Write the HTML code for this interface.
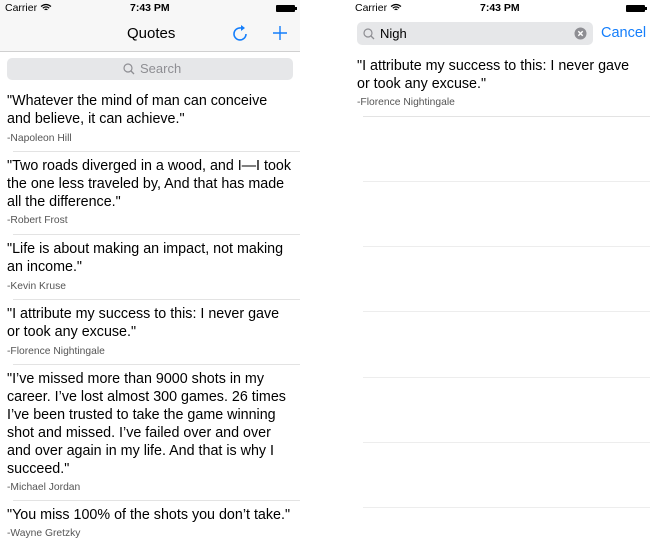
<!DOCTYPE html>
<html><head><meta charset="utf-8"><style>
*{margin:0;padding:0;box-sizing:border-box}
body{width:650px;height:534px;background:#fff;position:relative;overflow:hidden;font-family:"Liberation Sans",sans-serif;color:#000}
.a{position:absolute;white-space:nowrap}
.q{font-size:14.3px;left:7px}
.au{font-size:10.3px;color:#555;left:7px}
.sep{position:absolute;height:1px;background:#e3e3e3}
.sb{font-size:10.5px}
</style></head><body>
<div class="a" style="left:0;top:0;width:300px;height:52px;background:#f7f7f7;border-bottom:1px solid #d0d0d0"></div>
<div class="a sb" style="left:5px;top:2px">Carrier</div>
<svg class="a" style="left:40px;top:3px" width="12" height="9" viewBox="0 0 12 9"><path d="M1 3.5Q6 -0.5 11 3.5M2.8 5.2Q6 2.6 9.2 5.2M4.6 6.8Q6 5.8 7.4 6.8" stroke="#000" stroke-width="1.2" fill="none"/></svg>
<div class="a sb" style="left:130px;top:2px;font-weight:bold">7:43 PM</div>
<div class="a" style="left:276px;top:5px;width:19px;height:7px;background:#000;border-radius:1px"></div>
<div class="a" style="left:295px;top:7px;width:1.5px;height:3px;background:#000"></div>
<div class="a" style="left:127px;top:25px;font-size:15px">Quotes</div>
<svg class="a" style="left:232px;top:24px" width="18" height="19" viewBox="0 0 18 19"><path d="M14 10A6 6 0 1 1 9 4" stroke="#147efb" stroke-width="1.6" fill="none"/><path d="M9 1L13 4L9 7Z" fill="#147efb"/></svg>
<svg class="a" style="left:272px;top:25px" width="16" height="16"><path d="M8 1V15M1 8H15" stroke="#147efb" stroke-width="1.4"/></svg>
<div class="a" style="left:7px;top:58px;width:286px;height:22px;background:#e6e7e9;border-radius:5px"></div>
<svg class="a" style="left:123px;top:63px" width="12" height="12"><circle cx="5" cy="5" r="4" stroke="#8e8e93" stroke-width="1.2" fill="none"/><path d="M8 8L11 11" stroke="#8e8e93" stroke-width="1.3"/></svg>
<div class="a" style="left:140px;top:61px;font-size:13px;color:#8e8e93">Search</div>

<div class="a q" style="top:93px">"Whatever the mind of man can conceive</div>
<div class="a q" style="top:111px">and believe, it can achieve."</div>
<div class="a au" style="top:133px">-Napoleon Hill</div>
<div class="sep" style="left:13px;width:287px;top:151px"></div>

<div class="a q" style="top:158px">"Two roads diverged in a wood, and I—I took</div>
<div class="a q" style="top:176px">the one less traveled by, And that has made</div>
<div class="a q" style="top:194px">all the difference."</div>
<div class="a au" style="top:215px">-Robert Frost</div>
<div class="sep" style="left:13px;width:287px;top:234px"></div>

<div class="a q" style="top:241px">"Life is about making an impact, not making</div>
<div class="a q" style="top:259px">an income."</div>
<div class="a au" style="top:281px">-Kevin Kruse</div>
<div class="sep" style="left:13px;width:287px;top:299px"></div>

<div class="a q" style="top:306px">"I attribute my success to this: I never gave</div>
<div class="a q" style="top:324px">or took any excuse."</div>
<div class="a au" style="top:346px">-Florence Nightingale</div>
<div class="sep" style="left:13px;width:287px;top:364px"></div>

<div class="a q" style="top:371px">"I’ve missed more than 9000 shots in my</div>
<div class="a q" style="top:389px">career. I’ve lost almost 300 games. 26 times</div>
<div class="a q" style="top:407px">I’ve been trusted to take the game winning</div>
<div class="a q" style="top:425px">shot and missed. I’ve failed over and over</div>
<div class="a q" style="top:443px">and over again in my life. And that is why I</div>
<div class="a q" style="top:461px">succeed."</div>
<div class="a au" style="top:482px">-Michael Jordan</div>
<div class="sep" style="left:13px;width:287px;top:500px"></div>

<div class="a q" style="top:507px">"You miss 100% of the shots you don’t take."</div>
<div class="a au" style="top:528px">-Wayne Gretzky</div>

<div class="a sb" style="left:355px;top:2px">Carrier</div>
<svg class="a" style="left:390px;top:3px" width="12" height="9" viewBox="0 0 12 9"><path d="M1 3.5Q6 -0.5 11 3.5M2.8 5.2Q6 2.6 9.2 5.2M4.6 6.8Q6 5.8 7.4 6.8" stroke="#000" stroke-width="1.2" fill="none"/></svg>
<div class="a sb" style="left:480px;top:2px;font-weight:bold">7:43 PM</div>
<div class="a" style="left:626px;top:5px;width:19px;height:7px;background:#000;border-radius:1px"></div>
<div class="a" style="left:645px;top:7px;width:1.5px;height:3px;background:#000"></div>
<div class="a" style="left:357px;top:22px;width:236px;height:23px;background:#e6e7e9;border-radius:5px"></div>
<svg class="a" style="left:363px;top:28px" width="12" height="12"><circle cx="5" cy="5" r="4" stroke="#8e8e93" stroke-width="1.2" fill="none"/><path d="M8 8L11 11" stroke="#8e8e93" stroke-width="1.3"/></svg>
<div class="a" style="left:380px;top:26px;font-size:13px">Nigh</div>
<svg class="a" style="left:574px;top:27px" width="13" height="13"><circle cx="6.5" cy="6.5" r="6" fill="#8e8e93"/><path d="M4.3 4.3L8.7 8.7M8.7 4.3L4.3 8.7" stroke="#fff" stroke-width="1.4"/></svg>
<div class="a" style="left:601px;top:25px;font-size:14.5px;color:#147efb">Cancel</div>

<div class="a q" style="left:357px;top:58px">"I attribute my success to this: I never gave</div>
<div class="a q" style="left:357px;top:76px">or took any excuse."</div>
<div class="a au" style="left:357px;top:97px">-Florence Nightingale</div>
<div class="sep" style="left:363px;width:287px;top:116px"></div>
<div class="sep" style="left:363px;width:287px;top:181px;background:#ededed"></div>
<div class="sep" style="left:363px;width:287px;top:246px;background:#ededed"></div>
<div class="sep" style="left:363px;width:287px;top:311px;background:#ededed"></div>
<div class="sep" style="left:363px;width:287px;top:377px;background:#ededed"></div>
<div class="sep" style="left:363px;width:287px;top:442px;background:#ededed"></div>
<div class="sep" style="left:363px;width:287px;top:507px;background:#ededed"></div>
</body></html>
